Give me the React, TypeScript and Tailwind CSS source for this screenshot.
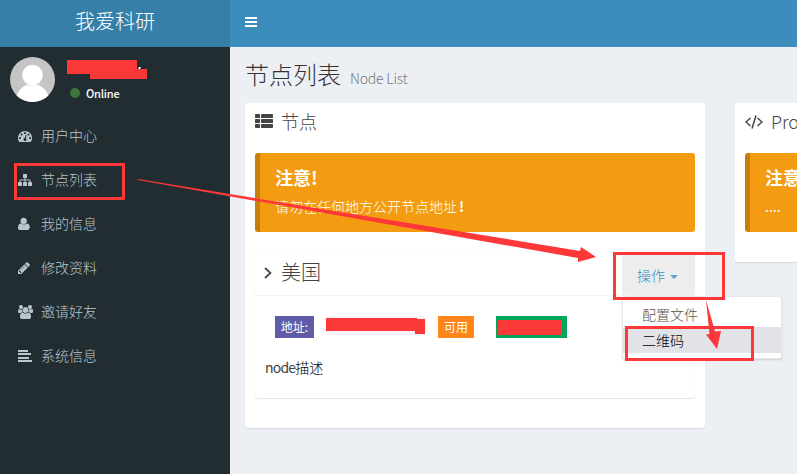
import type { ReactNode } from "react";

const PATHS = {
  dashboard:
    "M384 1152q0-53-37.5-90.5t-90.5-37.5-90.5 37.5-37.5 90.5 37.5 90.5 90.5 37.5 90.5-37.5 37.5-90.5zm192-448q0-53-37.5-90.5t-90.5-37.5-90.5 37.5-37.5 90.5 37.5 90.5 90.5 37.5 90.5-37.5 37.5-90.5zm428 481l101-382q6-26-7.5-48.5t-38.5-29.5-48 6.5-30 39.5l-101 382q-60 5-107 43.5t-63 98.5q-20 77 20 146t117 89 146-20 89-117q16-60-6-117t-72-91zm660-33q0-53-37.5-90.5t-90.5-37.5-90.5 37.5-37.5 90.5 37.5 90.5 90.5 37.5 90.5-37.5 37.5-90.5zm-640-640q0-53-37.5-90.5t-90.5-37.5-90.5 37.5-37.5 90.5 37.5 90.5 90.5 37.5 90.5-37.5 37.5-90.5zm448 192q0-53-37.5-90.5t-90.5-37.5-90.5 37.5-37.5 90.5 37.5 90.5 90.5 37.5 90.5-37.5 37.5-90.5zm320 448q0 261-141 483-19 29-54 29h-1402q-35 0-54-29-141-221-141-483 0-182 71-348t191-286 286-191 348-71 348 71 286 191 191 286 71 348z",
  sitemap:
    "M1792 1248v320q0 40-28 68t-68 28h-320q-40 0-68-28t-28-68v-320q0-40 28-68t68-28h96v-192h-512v192h96q40 0 68 28t28 68v320q0 40-28 68t-68 28h-320q-40 0-68-28t-28-68v-320q0-40 28-68t68-28h96v-192h-512v192h96q40 0 68 28t28 68v320q0 40-28 68t-68 28h-320q-40 0-68-28t-28-68v-320q0-40 28-68t68-28h96v-192q0-52 38-90t90-38h512v-192h-96q-40 0-68-28t-28-68v-320q0-40 28-68t68-28h320q40 0 68 28t28 68v320q0 40-28 68t-68 28h-96v192h512q52 0 90 38t38 90v192h96q40 0 68 28t28 68z",
  user: "M1450 1399q0 109-70 187t-170 78h-970q-100 0-170-78t-70-187q0-85 10-160.500t36-152 66-131 107-89 153-34.500q150 128 383 128t383-128q86 0 153 34.500t107 89 66 131 36 152 10 160.500zM1145 512q0 180-123 300t-297 120-297-120-123-300 123-300 297-120 297 120 123 300z",
  pencil:
    "M363 1536l91-91-235-235-91 91v107h128v128h107zm523-928q0-22-22-22-10 0-17 7l-542 542q-7 7-7 17 0 22 22 22 10 0 17-7l542-542q7-7 7-17zm-54-192l416 416-832 832h-416v-416zm683 96q0 53-37 90l-166 166-416-416 166-165q36-38 90-38 53 0 91 38l235 234q37 39 37 91z",
  users:
    "M593 896q-162 5-265 128h-134q-82 0-138-40.5t-56-118.5q0-353 124-353 6 0 43.5 21t97.5 42.5 119 21.5q67 0 133-23-5 37-5 66 0 159 90 289zm1071 637q0 120-73 189.5t-194 69.5h-874q-121 0-194-69.5t-73-189.5q0-53 3.5-103.5t14-109 26.5-108.5 43-97.5 62-81 85.5-53.5 111.5-20q10 0 43 21.5t73 48 107 48 135 21.5 135-21.5 107-48 73-48 43-21.5q61 0 111.5 20t85.5 53.5 62 81 43 97.5 26.5 108.5 14 109 3.5 103.5zm-1024-1277q0 106-75 181t-181 75-181-75-75-181 75-181 181-75 181 75 75 181zm704 384q0 159-112.5 271.5t-271.5 112.5-271.5-112.5-112.5-271.5 112.5-271.5 271.5-112.5 271.5 112.5 112.5 271.5zm576 225q0 78-56 118.5t-138 40.5h-134q-103-123-265-128 90-130 90-289 0-29-5-66 66 23 133 23 59 0 119-21.5t97.5-42.5 43.5-21q124 0 124 353zm-128-609q0 106-75 181t-181 75-181-75-75-181 75-181 181-75 181 75 75 181z",
  align:
    "M0 128h1280v256H0zM0 512h1664v256H0zM0 1024h1408v256H0zM0 1408h1792v256H0z",
};

const MENU: { icon: keyof typeof PATHS; label: string }[] = [
  { icon: "dashboard", label: "用户中心" },
  { icon: "sitemap", label: "节点列表" },
  { icon: "user", label: "我的信息" },
  { icon: "pencil", label: "修改资料" },
  { icon: "users", label: "邀请好友" },
  { icon: "align", label: "系统信息" },
];

function MenuIcon({ name }: { name: keyof typeof PATHS }) {
  return (
    <svg viewBox="0 0 1792 1792" className="h-3.5 w-3.5 overflow-visible fill-current">
      <path d={PATHS[name]} />
    </svg>
  );
}

function Avatar() {
  return (
    <svg viewBox="0 0 45 45" className="h-[45px] w-[45px] rounded-full">
      <rect width="45" height="45" fill="#c5c5c5" />
      <circle cx="22.5" cy="18" r="10.3" fill="#fff" />
      <ellipse cx="22.5" cy="43.5" rx="16.5" ry="16.500" fill="#fff" />
      <path d="M15 27q7.500 4 15 0" fill="none" stroke="#e4e4e4" strokeWidth="0.6" />
    </svg>
  );
}

function Sidebar() {
  return (
    <aside className="w-[230px] shrink-0 bg-[#222d32] text-[#b8c7ce]">
      <div className="flex h-[67px] gap-[15px] px-2.5 pt-2.5">
        <Avatar />
        <div className="flex items-center gap-1.5 pt-[14px] text-[11px] leading-4 font-medium tracking-[-0.2px] text-white">
          <span className="h-2.5 w-2.5 rounded-full bg-[#3c763d]" />
          <span>Online</span>
        </div>
      </div>
      <nav>
        {MENU.map((item) => (
          <a key={item.label} className="flex h-11 items-center gap-[9px] pl-[18px] text-sm font-light">
            <MenuIcon name={item.icon} />
            <span className="pb-0.5">{item.label}</span>
          </a>
        ))}
      </nav>
    </aside>
  );
}

function Box({ className, icon, title, children }: { className: string; icon: ReactNode; title: string; children: ReactNode }) {
  return (
    <section className={`shrink-0 rounded-[3px] bg-white px-2.5 shadow-[0_1px_1px_rgba(0,0,0,0.1)] ${className}`}>
      <h3 className="flex h-[50px] items-start gap-2 pt-1.5 text-[18px] leading-6 font-light text-[#444]">
        {icon}
        <span className="whitespace-nowrap">{title}</span>
      </h3>
      {children}
    </section>
  );
}

function Callout({ children }: { children: ReactNode }) {
  return (
    <div className="h-[79px] rounded-[3px] border-l-[5px] border-[#c87f0a] bg-[#f39c12] pt-[13px] pl-[15px] text-white">
      <h4 className="text-[18px] leading-[22px] font-bold">注意!</h4>
      <p className="mt-2 text-sm leading-5">{children}</p>
    </div>
  );
}

function ActionTab() {
  return (
    <div className="relative h-[42px] w-[73px] bg-[#ededed]">
      <a className="flex h-full items-center gap-[5px] pt-px pl-[15px] text-sm font-light text-[#3c8dbc]">
        操作
        <span className="mt-1 h-0 w-0 border-x-4 border-t-4 border-x-transparent border-t-[#5da3cc]" />
      </a>
      <ul className="absolute top-[43px] left-0 z-10 h-[63px] w-[160px] rounded-[3px] border border-[#e9e9eb] bg-white pt-1 text-sm leading-[26px] shadow-[0_1px_2px_rgba(0,0,0,0.15)]">
        <li className="h-[26px] pl-[19px] font-light text-[#555]">配置文件</li>
        <li className="h-[26px] bg-[#e1e3e9] pl-[19px] font-light text-black">二维码</li>
      </ul>
    </div>
  );
}

function NodeCard() {
  return (
    <div className="mt-[21px] h-[145px] rounded-[3px] shadow-[0_1px_1px_rgba(0,0,0,0.1),0_0_1px_rgba(0,0,0,0.08)]">
      <div className="flex h-[43px] items-start justify-between border-b border-[#f4f4f4]">
        <h3 className="flex items-center gap-[9px] pt-[3px] pl-[9px] text-[20px] leading-8 font-light text-[#444]">
          <svg viewBox="0 0 8 12" className="mt-0.5 h-3 w-2 fill-none stroke-current stroke-[1.7]">
            <path d="M1 1l5.500 5L1 11" />
          </svg>
          美国
        </h3>
        <ActionTab />
      </div>
      <div className="flex items-start pt-5 pl-5 text-xs leading-[22px] text-white">
        <span className="h-[22px] w-[39px] bg-[#605ca8] text-center">地址:</span>
        <code className="ml-3 h-[19px] w-[100px] rounded bg-[#f9f2f4]" />
        <span className="ml-3 h-[22px] w-9 bg-[#ff851b] text-center">可用</span>
        <span className="ml-[22px] h-[22px] w-[71px] bg-[#00a65a]" />
      </div>
      <p className="mt-[19px] pl-2.5 text-sm leading-5 text-[#444]">
        <span className="tracking-[-0.8px]">node</span>
        <span className="font-light text-black">描述</span>
      </p>
    </div>
  );
}

function Markup() {
  return (
    <svg viewBox="0 0 797 474" className="pointer-events-none absolute inset-0 z-20 h-[474px] w-[797px]" fill="#fc3838">
      <path d="M67 60h70v9h10v10H90v-5H67z" />
      <path d="M138 69l1-2h2l-1 2z" fill="#fff" />
      <path d="M326 318h91v1h8v15h-10v-3h-89z" />
      <path d="M498 320h64v15h-64z" />
      <g fill="none" stroke="#fc3838" strokeWidth="3">
        <path d="M15.500 164.500h108v34h-108z" />
        <path d="M614.500 253.500h109v45h-109z" />
        <path d="M626.500 327.500h126v32h-126z" />
      </g>
      <path d="M138 179L580 251L581 247L596 257L578 262L578 258L138 180z" />
      <path d="M706 300L715 331.500L721 331L717 349L706 334.500L709.500 334z" />
    </svg>
  );
}

export default function App() {
  return (
    <div className="relative flex h-[474px] w-[797px] flex-col overflow-hidden bg-[#ecf0f5] font-['Noto_Sans_CJK_SC',sans-serif]">
      <header className="flex h-[47px] shrink-0 bg-[#3c8dbc] text-white">
        <div className="w-[230px] bg-[#367fa9] pt-[5px] text-center text-[20px] leading-8 font-light">我爱科研</div>
        <div className="flex flex-col gap-0.5 pt-[17px] pl-[15px]">
          <span className="h-0.5 w-3 bg-white" />
          <span className="h-0.5 w-3 bg-white" />
          <span className="h-0.5 w-3 bg-white" />
        </div>
      </header>
      <div className="flex min-h-0 flex-1">
        <Sidebar />
        <main className="min-w-0 flex-1 overflow-hidden pl-[15px]">
          <h1 className="flex h-14 items-baseline gap-[9px] pt-[9px] text-[24px] leading-9 font-light text-[#333]">
            节点列表
            <small className="text-sm tracking-[-0.2px] text-[#777]">Node List</small>
          </h1>
          <div className="flex items-start gap-[30px]">
            <Box
              className="h-[325px] w-[460px]"
              title="节点"
              icon={
                <svg viewBox="0 0 18 14" className="mt-[5px] h-3.5 w-[18px] fill-[#444]">
                  {[0, 5, 10].map((y) => (
                    <g key={y}>
                      <rect y={y} width="5" height="4" rx="0.7" />
                      <rect x="6" y={y} width="12" height="4" rx="0.7" />
                    </g>
                  ))}
                </svg>
              }
            >
              <Callout>
                <span className="font-light">请勿在任何地方公开节点地址</span>
                <span className="pl-0.5 font-bold">!</span>
              </Callout>
              <NodeCard />
            </Box>
            <Box
              className="h-[159px] w-[460px]"
              title="Pro"
              icon={
                <svg viewBox="0 0 18 14" className="mt-1.5 h-3.5 w-[18px] fill-none stroke-[#444] stroke-[1.5]">
                  <path d="M5.500 3L1 7l4.500 4M12.500 3L17 7l-4.500 4M11 .5L7 13.500" />
                </svg>
              }
            >
              <Callout>....</Callout>
            </Box>
          </div>
        </main>
      </div>
      <Markup />
    </div>
  );
}
